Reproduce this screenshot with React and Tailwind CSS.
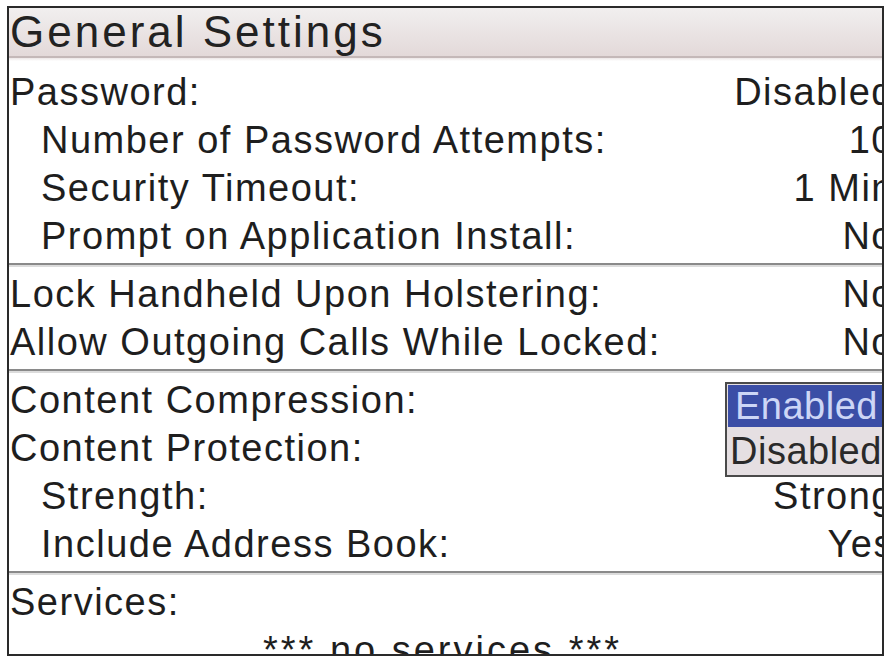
import React from 'react';

const font = { fontFamily: '"Liberation Sans", Arial, sans-serif' };

function Row({ label, value, indent, children }) {
  return (
    <div className="relative flex h-[48px] items-center justify-between">
      <span className={`whitespace-nowrap ${indent ? 'pl-[32px]' : 'pl-[1px]'}`}>{label}</span>
      {value && <span className="mr-[-12px] whitespace-nowrap">{value}</span>}
      {children}
    </div>
  );
}

function Divider() {
  return (
    <div className="my-[3px]">
      <div className="h-[2px] bg-[#8a8a8a]" />
      <div className="h-[2px] bg-[#dcdcdc]" />
    </div>
  );
}

export default function App() {
  return (
    <div className="h-[663px] w-[891px] overflow-hidden bg-white pt-[6px] pl-[7px]" style={font}>
      <div className="h-[650px] w-[877px] overflow-hidden border-2 border-[#2a2a2a] bg-white text-[38px] leading-none tracking-[1.5px] text-[#1e1e1e]">
        {/* title bar */}
        <div className="flex h-[50px] items-center border-b-2 border-[#c4b8b8] bg-gradient-to-b from-[#f1efef] to-[#e3d9d9] pl-[1px] text-[44px] tracking-[3px] text-[#222]">
          General Settings
        </div>
        <div className="h-[3px] bg-gradient-to-b from-[#ece6e6] to-white" />

        <div className="pt-[7px]">
          <Row label="Password:" value="Disabled" />
          <Row label="Number of Password Attempts:" value="10" indent />
          <Row label="Security Timeout:" value="1 Min" indent />
          <Row label="Prompt on Application Install:" value="No" indent />
        </div>
        <Divider />
        <div>
          <Row label="Lock Handheld Upon Holstering:" value="No" />
          <Row label="Allow Outgoing Calls While Locked:" value="No" />
        </div>
        <Divider />
        <div>
          <Row label="Content Compression:">
            {/* open choice list */}
            <div className="absolute top-[6px] right-[-14px] z-10 w-[171px] overflow-hidden border-2 border-[#4a4a4a] bg-[#e5dfe2] p-[1px] tracking-[0.5px]">
              <div className="flex h-[42px] items-center whitespace-nowrap bg-[#3b4ea6] pl-[7px] text-[#cdd6f6]">Enabled</div>
              <div className="flex h-[47px] items-center whitespace-nowrap pl-[2px] text-[#2a2a2a]">Disabled</div>
            </div>
          </Row>
          <Row label="Content Protection:" />
          <Row label="Strength:" value="Strong" indent />
          <Row label="Include Address Book:" value="Yes" indent />
        </div>
        <Divider />
        <div>
          <Row label="Services:" />
          <div className="flex h-[48px] items-center justify-center pr-[6px] tracking-[3px]">*** no services ***</div>
        </div>
      </div>
    </div>
  );
}
